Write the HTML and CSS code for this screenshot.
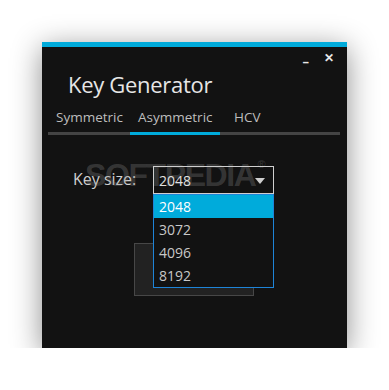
FILE: index.html
```html
<!DOCTYPE html>
<html>
<head>
<meta charset="utf-8">
<link rel="stylesheet" href="styles.css">
</head>
<body>
<div class="window">
  <div class="controls">
    <span class="ctl min">&#8211;</span>
    <span class="ctl close">&#10005;</span>
  </div>
  <div class="title">Key Generator</div>
  <div class="tabs">
    <div class="tab t1">Symmetric</div>
    <div class="tab t2 active">Asymmetric</div>
    <div class="tab t3">HCV</div>
  </div>
  <div class="content">
    <div class="row">
      <span class="label">Key size:</span>
      <div class="select">
        <span class="value">2048</span>
        <svg class="arrow" width="10" height="6" viewBox="0 0 10 6"><path d="M0 0H10L5 6Z" fill="#cfcfcf"/></svg>
        <ul class="list">
          <li class="sel">2048</li>
          <li>3072</li>
          <li>4096</li>
          <li>8192</li>
        </ul>
      </div>
    </div>
    <div class="btnrow">
      <div class="button"></div>
    </div>
    <div class="watermark">SOFTPEDIA<sup>&#174;</sup></div>
  </div>
</div>
</body>
</html>
```
FILE: styles.css
```css
html, body { margin: 0; padding: 0; background: #fff; }
body { padding: 42px 0 0 42px; font-family: "Open Sans", "Noto Sans", sans-serif; }
.window {
  position: relative;
  width: 305px;
  height: 301px;
  background: #121212;
  border-top: 5px solid #00abdb;
  box-shadow: 0 6px 28px rgba(0,0,0,0.45);
}
.controls {
  display: flex;
  justify-content: flex-end;
  gap: 15px;
  padding: 3px 13px 0 0;
  height: 17px;
  color: #e8e8e8;
}
.ctl { font-size: 13px; line-height: 17px; }
.min { font-weight: bold; position: relative; top: 3px; }
.close { font-size: 12px; font-weight: bold; position: relative; top: -1px; }
.title {
  padding-left: 26px;
  margin-top: 2px;
  font-size: 22px;
  line-height: 30px;
  color: #e6e6e6;
  letter-spacing: -0.3px;
}
.tabs {
  display: flex;
  margin: 8px 7px 0 6px;
  border-bottom: 3px solid #444;
}
.tab {
  font-size: 13.5px;
  line-height: 20px;
  color: #bdbdbd;
  padding: 0 0 5px 8px;
  margin-bottom: -3px;
  border-bottom: 3px solid transparent;
  box-sizing: border-box;
}
.t1 { width: 82px; }
.t2 { width: 90px; }
.t3 { padding-left: 14px; }
.tab.active { border-bottom-color: #00abdb; }
.content { position: relative; padding-top: 31px; }
.row { display: flex; align-items: center; padding-left: 31px; }
.label {
  width: 80px;
  font-size: 16px;
  color: #d0d0d0;
  position: relative;
  top: -1px;
}
.select {
  position: relative;
  width: 106px;
  height: 26px;
  border: 1px solid #cfcfcf;
  display: flex;
  align-items: center;
  justify-content: space-between;
  padding: 0 8px 0 5px;
  z-index: 2;
}
.value { font-size: 14px; color: #e0e0e0; }
.arrow { display: block; margin-top: 1px; }
.list {
  position: absolute;
  left: -1px;
  top: 27px;
  width: 119px;
  margin: 0;
  padding: 0;
  list-style: none;
  background: #121212;
  border: 1px solid #1e84d8;
}
.list li {
  height: 23px;
  line-height: 23px;
  padding-left: 5px;
  font-size: 14px;
  color: #c8c8c8;
}
.list li.sel { background: #00abdb; color: #fff; }
.btnrow { padding: 49px 0 0 92px; }
.button {
  width: 118px;
  height: 51px;
  background: #222;
  border: 1px solid #474747;
}
.watermark {
  position: absolute;
  left: 43px;
  top: 22px;
  font-family: "Liberation Sans", sans-serif;
  font-weight: bold;
  font-size: 32px;
  letter-spacing: -1.4px;
  color: rgba(140,140,140,0.3);
  z-index: 1;
  pointer-events: none;
}
.watermark sup { font-size: 11px; vertical-align: top; position: relative; top: 1px; left: 2px; font-weight: normal; }
```
